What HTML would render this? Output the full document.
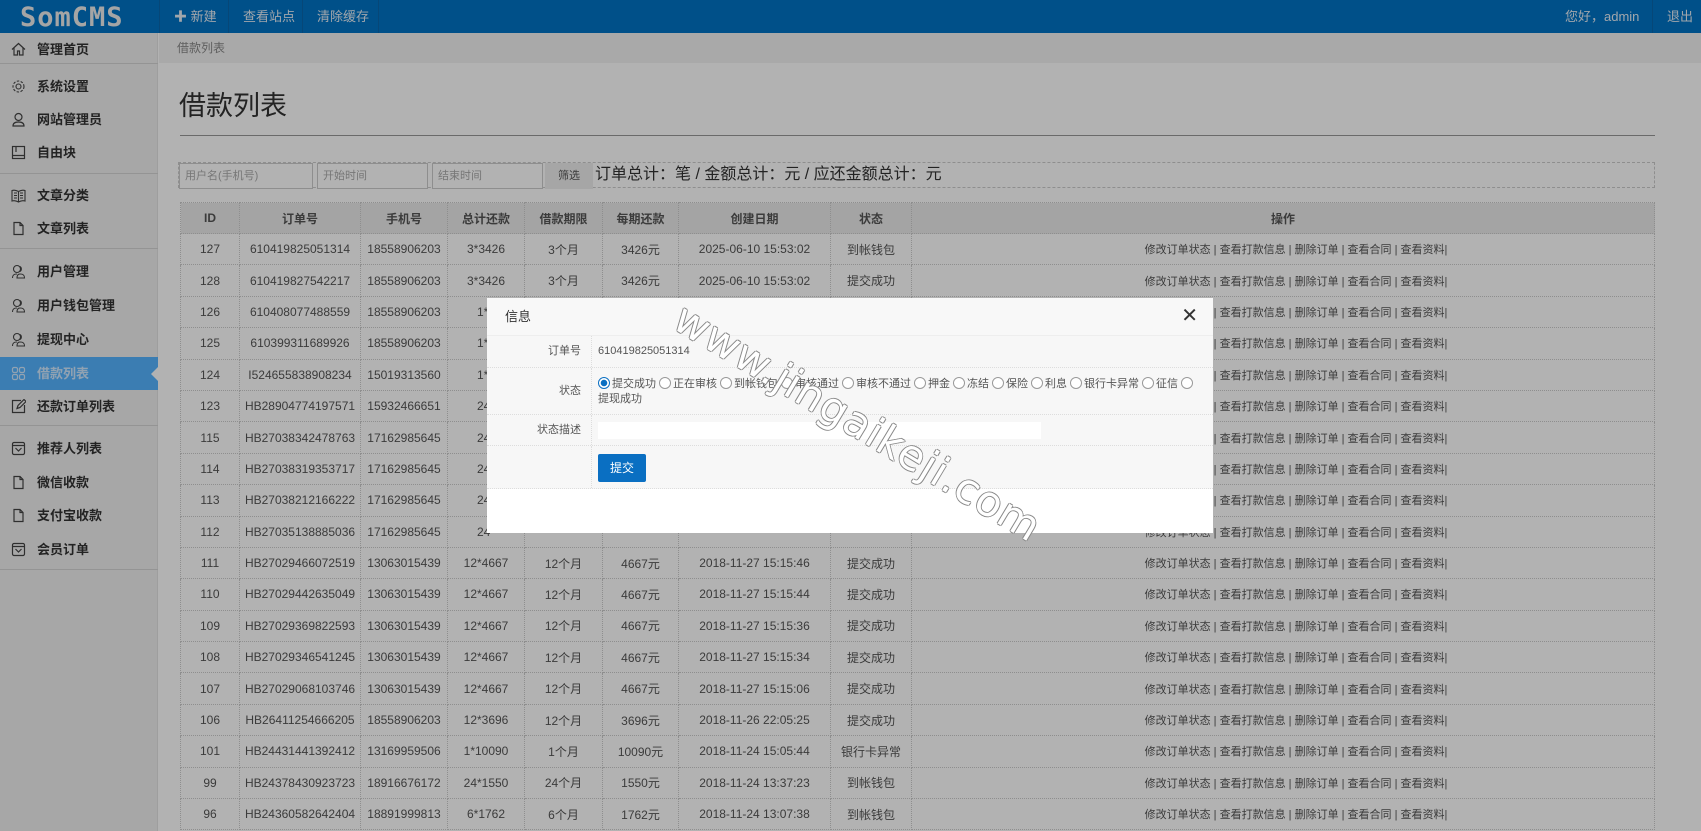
<!DOCTYPE html>
<html><head><meta charset="utf-8"><style>
*{margin:0;padding:0;box-sizing:border-box}
body{width:1701px;height:831px;overflow:hidden;position:relative;background:#fff;font-family:"Liberation Sans","Noto Sans CJK SC",sans-serif;font-size:12px;color:#555}
#hd{position:absolute;left:0;top:0;width:1701px;height:33px;background:#0073c5;color:#fff}
#logo{position:absolute;left:20px;top:2px;width:115px;font:bold 27px "DejaVu Sans Mono","Liberation Mono",monospace;letter-spacing:1px;color:#ececec}
.nv{position:absolute;top:0;height:33px;line-height:33px;font-size:13px;border-left:1px solid #0a66ad;padding:0 14px;color:#e6eef6;white-space:nowrap}
#sb{position:absolute;left:0;top:33px;width:158px;height:798px;background:#f0f0f0;border-right:1px solid #e2e2e2}
.it{position:absolute;left:0;width:158px;height:33px;line-height:33px;padding-left:37px;font-size:13px;font-weight:bold;color:#333}
.it svg{position:absolute;left:11px;top:9px}
.ln{position:absolute;left:0;width:158px;height:1px;background:#d4d4d4}
.act{background:#55b4ff;color:#d0e8ff}
#bc{position:absolute;left:159px;top:33px;width:1542px;height:30px;background:#f2f2f2;line-height:30px;padding-left:18px;color:#888;font-size:12px}
#tt{position:absolute;left:179px;top:84px;font-size:27px;color:#333}
#hr{position:absolute;left:180px;top:135px;width:1475px;height:1px;background:#999}
#flt{position:absolute;left:178px;top:162px;width:1477px;height:26px;border:1px dashed #ccc}
.inp{position:absolute;top:0;height:26px;border:1px solid #ccc;background:#fff;color:#aaa;line-height:24px;padding-left:5px;font-size:11px}
#btn{position:absolute;left:366px;top:0;width:48px;height:26px;background:#eee;color:#555;text-align:center;line-height:26px;font-size:11px}
#sum{position:absolute;left:416px;top:-2px;font-size:16px;color:#333;line-height:28px}
table{position:absolute;left:180px;top:202px;width:1475px;border-collapse:collapse}
td,th{border:1px dotted #ccc;text-align:center;height:31.4px;font-size:12px;color:#555;white-space:nowrap;padding:0}
td:last-child{font-size:11px;padding-left:26px}
th{background:#ebebeb;font-weight:bold;height:31px}
#ov{position:absolute;left:0;top:0;width:1701px;height:831px;background:rgba(0,0,0,.3)}
#md{position:absolute;left:487px;top:298px;width:726px;height:235px;background:#fff}
#mt{height:38px;background:#f8f8f8;border-bottom:1px solid #eee;line-height:38px;padding-left:18px;font-size:13px;color:#333}
#x{position:absolute;right:15px;top:6px;font-size:20px;color:#333;line-height:24px}
.fr{position:absolute;left:0;width:726px;background:#f7f7f7;border-bottom:1px dotted #ddd}
.lb{position:absolute;left:0;top:0;bottom:0;width:105px;border-right:1px dotted #ddd;text-align:right;padding-right:10px;color:#555;font-size:11px}
.vl{position:absolute;left:111px;color:#555;font-size:11px}
.rd{display:inline-block;width:12px;height:12px;border:1px solid #999;border-radius:50%;vertical-align:-2px;background:#fff;margin:0 2px 0 3px}
.rd.on{border-color:#0a6fc2;background:radial-gradient(#0a6fc2 0 3px,#fff 3.5px);margin-left:0}
#wm{position:absolute;font:42px "DejaVu Sans",sans-serif;color:#fff;transform:rotate(31deg);letter-spacing:1px;text-shadow:-1px 0 #888,1px 0 #888,0 1px #888,0 -1px #888;white-space:nowrap;transform-origin:center;left:648px;top:398px}
</style></head><body>
<div id="hd"><div id="logo">SomCMS</div>
<div class="nv" style="left:159px">✚ 新建</div>
<div class="nv" style="left:228px">查看站点</div>
<div class="nv" style="left:302px">清除缓存</div>
<div class="nv" style="left:378px;padding:0"></div>
<div class="nv" style="left:1551px;border-left:0">您好，admin</div>
<div class="nv" style="left:1652px">退出</div>
</div>
<div id="sb">
<div class="it" style="top:0"><svg width="15" height="15" viewBox="0 0 15 15" fill="none" stroke="#444" stroke-width="1.2"><path d="M1 7.5 7.5 1.5 14 7.5M3 6v7h3.5V9h2v4H12V6"/></svg>管理首页</div>
<div class="ln" style="top:30px"></div>
<div class="it" style="top:37px"><svg width="15" height="15" viewBox="0 0 15 15" fill="none" stroke="#444" stroke-width="1.1"><circle cx="7.5" cy="7.5" r="2.5"/><circle cx="7.5" cy="7.5" r="5.5" stroke-dasharray="2.5 1.5"/></svg>系统设置</div>
<div class="it" style="top:70px"><svg width="15" height="15" viewBox="0 0 15 15" fill="none" stroke="#444" stroke-width="1.2"><circle cx="7.5" cy="5" r="3.5"/><path d="M2 14c0-3 2-4 5.5-4S13 11 13 14z"/></svg>网站管理员</div>
<div class="it" style="top:103px"><svg width="15" height="15" viewBox="0 0 15 15" fill="none" stroke="#444" stroke-width="1.2"><rect x="1.5" y="1.5" width="12" height="12"/><path d="M1.5 10.5h12M5 2v5"/></svg>自由块</div>
<div class="ln" style="top:140px"></div>
<div class="it" style="top:146px"><svg width="15" height="15" viewBox="0 0 15 15" fill="none" stroke="#444" stroke-width="1.1"><path d="M1 2.5Q4 1.5 7.5 3.5Q11 1.5 14 2.5V13Q11 12 7.5 14Q4 12 1 13zM7.5 3.5V14M3 5h3M3 7.5h3M3 10h3M9 5h3M9 7.5h3M9 10h3"/></svg>文章分类</div>
<div class="it" style="top:179px"><svg width="15" height="15" viewBox="0 0 15 15" fill="none" stroke="#444" stroke-width="1.2"><path d="M3 1.5h6l3 3v9H3zM9 1.5v3h3"/></svg>文章列表</div>
<div class="ln" style="top:215px"></div>
<div class="it" style="top:222px"><svg width="15" height="15" viewBox="0 0 15 15" fill="none" stroke="#444" stroke-width="1.1"><circle cx="6" cy="5" r="3.5"/><path d="M1.5 14c0-3 1.5-4 4.5-4M9 2.5a3 3 0 0 1 0 5M9 10c3 0 4.5 1 4.5 4H6c0-3 1-4 3-4z"/></svg>用户管理</div>
<div class="it" style="top:256px"><svg width="15" height="15" viewBox="0 0 15 15" fill="none" stroke="#444" stroke-width="1.1"><circle cx="6" cy="5" r="3.5"/><path d="M1.5 14c0-3 1.5-4 4.5-4M9 2.5a3 3 0 0 1 0 5M9 10c3 0 4.5 1 4.5 4H6c0-3 1-4 3-4z"/></svg>用户钱包管理</div>
<div class="it" style="top:290px"><svg width="15" height="15" viewBox="0 0 15 15" fill="none" stroke="#444" stroke-width="1.1"><circle cx="6" cy="5" r="3.5"/><path d="M1.5 14c0-3 1.5-4 4.5-4M9 2.5a3 3 0 0 1 0 5M9 10c3 0 4.5 1 4.5 4H6c0-3 1-4 3-4z"/></svg>提现中心</div>
<div class="it act" style="top:324px"><svg width="15" height="15" viewBox="0 0 15 15" fill="none" stroke="#d0e8ff" stroke-width="1.2"><rect x="1.5" y="1.5" width="5" height="5" rx="1.5"/><rect x="8.5" y="1.5" width="5" height="5" rx="1.5"/><rect x="1.5" y="8.5" width="5" height="5" rx="1.5"/><rect x="8.5" y="8.5" width="5" height="5" rx="1.5"/></svg>借款列表<span style="position:absolute;right:0;top:10px;width:0;height:0;border:7px solid transparent;border-right-color:#fff;border-left:0"></span></div>
<div class="it" style="top:357px"><svg width="15" height="15" viewBox="0 0 15 15" fill="none" stroke="#444" stroke-width="1.2"><path d="M10 1.5H1.5v12h12V6M6 9.5l1-3 6-6 2 2-6 6z"/></svg>还款订单列表</div>
<div class="ln" style="top:392px"></div>
<div class="it" style="top:399px"><svg width="15" height="15" viewBox="0 0 15 15" fill="none" stroke="#444" stroke-width="1.2"><rect x="1.5" y="1.5" width="12" height="12" rx="1.5"/><path d="M1.5 4.5h12M4.5 7l3 3 3-3"/></svg>推荐人列表</div>
<div class="it" style="top:433px"><svg width="15" height="15" viewBox="0 0 15 15" fill="none" stroke="#444" stroke-width="1.2"><path d="M3 1.5h6l3 3v9H3zM9 1.5v3h3"/></svg>微信收款</div>
<div class="it" style="top:466px"><svg width="15" height="15" viewBox="0 0 15 15" fill="none" stroke="#444" stroke-width="1.2"><path d="M3 1.5h6l3 3v9H3zM9 1.5v3h3"/></svg>支付宝收款</div>
<div class="it" style="top:500px"><svg width="15" height="15" viewBox="0 0 15 15" fill="none" stroke="#444" stroke-width="1.2"><rect x="1.5" y="1.5" width="12" height="12" rx="1.5"/><path d="M1.5 4.5h12M4.5 7l3 3 3-3"/></svg>会员订单</div>
<div class="ln" style="top:536px"></div>
</div>
<div id="bc">借款列表</div>
<div id="tt">借款列表</div>
<div id="hr"></div>
<div id="flt">
<div class="inp" style="left:0;width:134px">用户名(手机号)</div>
<div class="inp" style="left:138px;width:111px">开始时间</div>
<div class="inp" style="left:253px;width:111px">结束时间</div>
<div id="btn">筛选</div>
<div id="sum">订单总计：笔 / 金额总计：元 / 应还金额总计：元</div>
</div>
<table>
<colgroup><col style="width:59px"><col style="width:121px"><col style="width:87px"><col style="width:77px"><col style="width:78px"><col style="width:76px"><col style="width:152px"><col style="width:81px"><col></colgroup>
<tr><th>ID</th><th>订单号</th><th>手机号</th><th>总计还款</th><th>借款期限</th><th>每期还款</th><th>创建日期</th><th>状态</th><th>操作</th></tr>
<tr><td>127</td><td>610419825051314</td><td>18558906203</td><td>3*3426</td><td>3个月</td><td>3426元</td><td>2025-06-10 15:53:02</td><td>到帐钱包</td><td>修改订单状态 | 查看打款信息 | 删除订单 | 查看合同 | 查看资料|</td></tr>
<tr><td>128</td><td>610419827542217</td><td>18558906203</td><td>3*3426</td><td>3个月</td><td>3426元</td><td>2025-06-10 15:53:02</td><td>提交成功</td><td>修改订单状态 | 查看打款信息 | 删除订单 | 查看合同 | 查看资料|</td></tr>
<tr><td>126</td><td>610408077488559</td><td>18558906203</td><td>1*1</td><td></td><td></td><td></td><td></td><td>修改订单状态 | 查看打款信息 | 删除订单 | 查看合同 | 查看资料|</td></tr>
<tr><td>125</td><td>610399311689926</td><td>18558906203</td><td>1*1</td><td></td><td></td><td></td><td></td><td>修改订单状态 | 查看打款信息 | 删除订单 | 查看合同 | 查看资料|</td></tr>
<tr><td>124</td><td>I524655838908234</td><td>15019313560</td><td>1*1</td><td></td><td></td><td></td><td></td><td>修改订单状态 | 查看打款信息 | 删除订单 | 查看合同 | 查看资料|</td></tr>
<tr><td>123</td><td>HB28904774197571</td><td>15932466651</td><td>24*</td><td></td><td></td><td></td><td></td><td>修改订单状态 | 查看打款信息 | 删除订单 | 查看合同 | 查看资料|</td></tr>
<tr><td>115</td><td>HB27038342478763</td><td>17162985645</td><td>24*</td><td></td><td></td><td></td><td></td><td>修改订单状态 | 查看打款信息 | 删除订单 | 查看合同 | 查看资料|</td></tr>
<tr><td>114</td><td>HB27038319353717</td><td>17162985645</td><td>24*</td><td></td><td></td><td></td><td></td><td>修改订单状态 | 查看打款信息 | 删除订单 | 查看合同 | 查看资料|</td></tr>
<tr><td>113</td><td>HB27038212166222</td><td>17162985645</td><td>24*</td><td></td><td></td><td></td><td></td><td>修改订单状态 | 查看打款信息 | 删除订单 | 查看合同 | 查看资料|</td></tr>
<tr><td>112</td><td>HB27035138885036</td><td>17162985645</td><td>24*</td><td></td><td></td><td></td><td></td><td>修改订单状态 | 查看打款信息 | 删除订单 | 查看合同 | 查看资料|</td></tr>
<tr><td>111</td><td>HB27029466072519</td><td>13063015439</td><td>12*4667</td><td>12个月</td><td>4667元</td><td>2018-11-27 15:15:46</td><td>提交成功</td><td>修改订单状态 | 查看打款信息 | 删除订单 | 查看合同 | 查看资料|</td></tr>
<tr><td>110</td><td>HB27029442635049</td><td>13063015439</td><td>12*4667</td><td>12个月</td><td>4667元</td><td>2018-11-27 15:15:44</td><td>提交成功</td><td>修改订单状态 | 查看打款信息 | 删除订单 | 查看合同 | 查看资料|</td></tr>
<tr><td>109</td><td>HB27029369822593</td><td>13063015439</td><td>12*4667</td><td>12个月</td><td>4667元</td><td>2018-11-27 15:15:36</td><td>提交成功</td><td>修改订单状态 | 查看打款信息 | 删除订单 | 查看合同 | 查看资料|</td></tr>
<tr><td>108</td><td>HB27029346541245</td><td>13063015439</td><td>12*4667</td><td>12个月</td><td>4667元</td><td>2018-11-27 15:15:34</td><td>提交成功</td><td>修改订单状态 | 查看打款信息 | 删除订单 | 查看合同 | 查看资料|</td></tr>
<tr><td>107</td><td>HB27029068103746</td><td>13063015439</td><td>12*4667</td><td>12个月</td><td>4667元</td><td>2018-11-27 15:15:06</td><td>提交成功</td><td>修改订单状态 | 查看打款信息 | 删除订单 | 查看合同 | 查看资料|</td></tr>
<tr><td>106</td><td>HB26411254666205</td><td>18558906203</td><td>12*3696</td><td>12个月</td><td>3696元</td><td>2018-11-26 22:05:25</td><td>提交成功</td><td>修改订单状态 | 查看打款信息 | 删除订单 | 查看合同 | 查看资料|</td></tr>
<tr><td>101</td><td>HB24431441392412</td><td>13169959506</td><td>1*10090</td><td>1个月</td><td>10090元</td><td>2018-11-24 15:05:44</td><td>银行卡异常</td><td>修改订单状态 | 查看打款信息 | 删除订单 | 查看合同 | 查看资料|</td></tr>
<tr><td>99</td><td>HB24378430923723</td><td>18916676172</td><td>24*1550</td><td>24个月</td><td>1550元</td><td>2018-11-24 13:37:23</td><td>到帐钱包</td><td>修改订单状态 | 查看打款信息 | 删除订单 | 查看合同 | 查看资料|</td></tr>
<tr><td>96</td><td>HB24360582642404</td><td>18891999813</td><td>6*1762</td><td>6个月</td><td>1762元</td><td>2018-11-24 13:07:38</td><td>到帐钱包</td><td>修改订单状态 | 查看打款信息 | 删除订单 | 查看合同 | 查看资料|</td></tr>
</table>
<div id="ov"></div>
<div id="md">
<div id="mt">信息<span id="x">✕</span></div>
<div class="fr" style="top:38px;height:32px"><div class="lb" style="line-height:31px">订单号</div><div class="vl" style="top:9px">610419825051314</div></div>
<div class="fr" style="top:70px;height:47px"><div class="lb" style="line-height:46px">状态</div><div class="vl" style="top:9px;width:610px;line-height:15px"><span class="rd on"></span>提交成功<span class="rd"></span>正在审核<span class="rd"></span>到帐钱包<span class="rd"></span>审核通过<span class="rd"></span>审核不通过<span class="rd"></span>押金<span class="rd"></span>冻结<span class="rd"></span>保险<span class="rd"></span>利息<span class="rd"></span>银行卡异常<span class="rd"></span>征信<span class="rd"></span><br>提现成功</div></div>
<div class="fr" style="top:117px;height:31px"><div class="lb" style="line-height:30px">状态描述</div><div class="vl" style="top:7px;width:443px;height:17px;background:#fff"></div></div>
<div class="fr" style="top:148px;height:43px"><div class="lb"></div><div class="vl" style="top:8px;width:48px;height:28px;background:#0a6fc2;color:#fff;text-align:center;line-height:28px;border-radius:2px;font-size:12px">提交</div></div>
</div>
<div id="wm">www.jingaikeji.com</div>
</body></html>
